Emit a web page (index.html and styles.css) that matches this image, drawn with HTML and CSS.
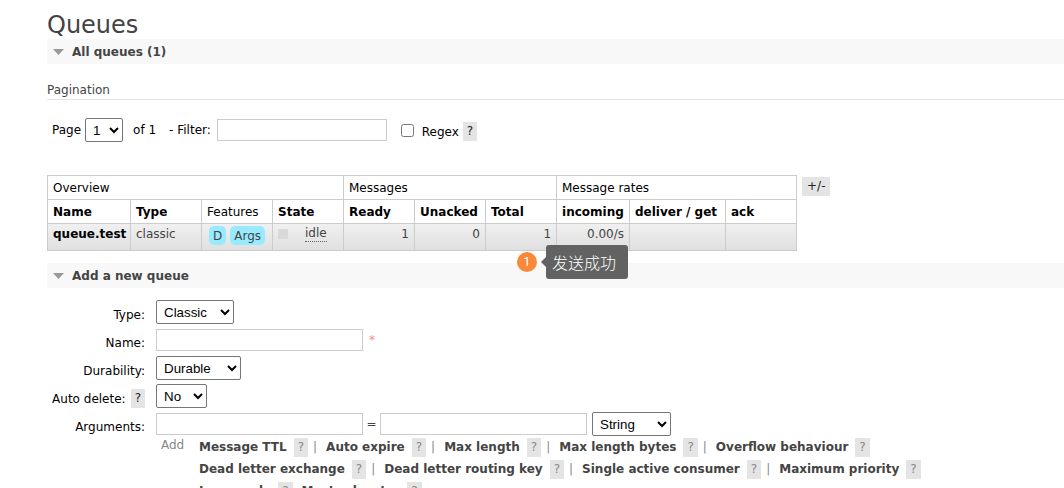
FILE: index.html
```html
<!DOCTYPE html>
<html lang="en">
<head>
<meta charset="utf-8">
<title>Queues</title>
<link rel="stylesheet" href="styles.css">
</head>
<body>
<main class="page">
  <h1 class="title">Queues</h1>
  <h2 class="section-bar"><svg class="caret" viewBox="0 0 11 6"><path d="M0 0h11L5.500 6z"/></svg>All queues (1)</h2>

  <h3 class="subhead">Pagination</h3>
  <div class="filters">
    <label for="pg">Page</label>
    <select id="pg" class="select select-page"><option>1</option></select>
    <span class="of">of 1</span>
    <label for="filter" class="filter-label">- Filter:</label>
    <input id="filter" class="text filter-input" type="text">
    <input id="regex" class="check" type="checkbox">
    <label for="regex" class="low">Regex</label>
    <button type="button" class="help low">?</button>
  </div>

  <div class="listing">
    <table class="queues">
      <colgroup><col class="c-name"><col class="c-std"><col class="c-std"><col class="c-std"><col class="c-std"><col class="c-std"><col class="c-std"><col class="c-in"><col class="c-get"><col class="c-std"></colgroup>
      <thead>
        <tr><th class="plain" colspan="4">Overview</th><th class="plain" colspan="3">Messages</th><th class="plain" colspan="3">Message rates</th></tr>
        <tr><th>Name</th><th>Type</th><th class="plain">Features</th><th>State</th><th>Ready</th><th>Unacked</th><th>Total</th><th>incoming</th><th>deliver / get</th><th>ack</th></tr>
      </thead>
      <tbody>
        <tr>
          <td><a class="queue-link" href="#">queue.test</a></td>
          <td>classic</td>
          <td><div class="tags"><span class="tag">D</span><span class="tag">Args</span></div></td>
          <td><div class="state"><span class="state-dot"></span><abbr class="idle">idle</abbr></div></td>
          <td class="num">1</td><td class="num">0</td><td class="num">1</td><td class="num">0.00/s</td><td></td><td></td>
        </tr>
      </tbody>
    </table>
    <button type="button" class="help columns">+/-</button>
    <div class="callout"><span class="badge">1</span><span class="tip">发送成功</span></div>
  </div>

  <h2 class="section-bar"><svg class="caret" viewBox="0 0 11 6"><path d="M0 0h11L5.500 6z"/></svg>Add a new queue</h2>

  <form class="form">
    <label class="label" for="type">Type:</label>
    <div class="field"><select id="type" class="select select-type"><option>Classic</option></select></div>
    <label class="label" for="name">Name:</label>
    <div class="field"><input id="name" class="text" type="text"><span class="required">*</span></div>
    <label class="label" for="dur">Durability:</label>
    <div class="field"><select id="dur" class="select select-dur"><option>Durable</option></select></div>
    <div class="label"><label for="auto">Auto delete:</label><button type="button" class="help">?</button></div>
    <div class="field"><select id="auto" class="select select-auto"><option>No</option></select></div>
    <label class="label" for="argkey">Arguments:</label>
    <div class="field">
      <input id="argkey" class="text" type="text"><span class="equals">=</span><input class="text" type="text" aria-label="Argument value">
      <select class="select select-string" aria-label="Argument type"><option>String</option></select>
    </div>
    <div class="args">
      <span class="add">Add</span>
      <div class="arg-lines">
        <div class="line"><a href="#">Message TTL</a><button type="button" class="help">?</button><i>|</i><a href="#">Auto expire</a><button type="button" class="help">?</button><i>|</i><a href="#">Max length</a><button type="button" class="help">?</button><i>|</i><a href="#">Max length bytes</a><button type="button" class="help">?</button><i>|</i><a href="#">Overflow behaviour</a><button type="button" class="help">?</button></div>
        <div class="line"><a href="#">Dead letter exchange</a><button type="button" class="help">?</button><i>|</i><a href="#">Dead letter routing key</a><button type="button" class="help">?</button><i>|</i><a href="#">Single active consumer</a><button type="button" class="help">?</button><i>|</i><a href="#">Maximum priority</a><button type="button" class="help">?</button></div>
        <div class="line"><a href="#">Lazy mode</a><button type="button" class="help last">?</button><a href="#">Master locator</a><button type="button" class="help">?</button></div>
      </div>
    </div>
  </form>
</main>
</body>
</html>
```
FILE: styles.css
```css
* { box-sizing: border-box; }
html { overflow-x: hidden; }
body {
  margin: 0;
  background: #fff;
  color: #444;
  font: 12px/18px Verdana, "DejaVu Sans", sans-serif;
}
.page { padding: 11px 0 0 47px; }
.title { margin: 0; padding-top: 1px; font-size: 24px; line-height: 27px; font-weight: normal; }
.section-bar {
  display: flex;
  align-items: center;
  height: 25px;
  margin: 0;
  padding-left: 6px;
  background: #f8f8f8;
  font-size: 12px;
  font-weight: bold;
}
.caret { width: 11px; height: 6px; margin-right: 8px; fill: #999; }
.subhead {
  margin: 17px 0 0;
  border-bottom: 1px solid #e4e4e4;
  font-size: 12px;
  font-weight: normal;
}

.filters {
  display: flex;
  align-items: center;
  height: 24px;
  margin: 18px 0 33px;
  padding-left: 5px;
  color: #000;
}
.select {
  height: 24px;
  padding-left: 3px;
  border: 1px solid #767676;
  border-radius: 2px;
  background: #fff;
  color: #000;
  font-family: Arial, "Liberation Sans", sans-serif;
}
.select-page { width: 38px; margin: 0 10px 0 4px; }
.select-type { width: 78px; }
.select-dur { width: 85px; }
.select-auto { width: 51px; }
.select-string { width: 79px; margin-left: 5px; }
.text {
  width: 207px;
  height: 22px;
  border: 1px solid #ccc;
  background: #fff;
}
.filter-input { width: 170px; }
.filter-label { margin: 0 6px 0 13px; }
.check { width: 13px; height: 13px; margin: 0 8px 0 14px; }
.low { margin-top: 3px; }
.help {
  height: 19px;
  padding: 0 4px;
  border: 0;
  background: #e4e4e4;
  color: #222;
  font: 12px/19px Verdana, "DejaVu Sans", sans-serif;
}
.filters .help { margin-left: 4px; }

.listing { position: relative; display: flex; align-items: flex-start; margin-bottom: 12px; }
.queues { width: 750px; border-collapse: collapse; table-layout: fixed; }
.c-name { width: 83px; }
.c-std { width: 71px; }
.c-in { width: 73px; }
.c-get { width: 96px; }
.queues th, .queues td {
  padding: 0 5px;
  border: 1px solid #ccc;
  text-align: left;
  white-space: nowrap;
}
.queues th { height: 24px; color: #000; }
.queues .plain { font-weight: normal; }
.queues td { height: 27px; padding-bottom: 6px; }
.queues .num { text-align: right; }
.queues tbody tr { background: linear-gradient(#f0f0f0, #dfdfdf); }
.queue-link { color: #000; font-weight: bold; text-decoration: none; }
.tags { display: flex; gap: 4px; height: 18px; padding: 1px 0 0 2px; }
.tag {
  flex: none;
  height: 19px;
  padding: 0 4px;
  border-radius: 5px;
  background: #98ebfe;
  line-height: 20px;
}
.state { display: flex; align-items: center; }
.state-dot { width: 10px; height: 10px; margin-right: 17px; background: #d9d9d9; }
.idle { border-bottom: 1px dotted #666; line-height: 15px; text-decoration: none; }
.columns { margin: 2px 0 0 5px; padding: 0 5px; }

.callout { position: absolute; top: 70px; left: 470px; display: flex; align-items: center; gap: 9px; }
.badge {
  width: 20px;
  height: 20px;
  border-radius: 50%;
  background: #f98838;
  color: #fff;
  text-align: center;
  font: 13px/20px Roboto, sans-serif;
}
.tip {
  position: relative;
  padding: 0 12px 0 6px;
  border-radius: 3px;
  background: #626262;
  color: #fff;
  font: 300 16px/34px "Noto Sans CJK SC", sans-serif;
}
.tip::before {
  content: "";
  position: absolute;
  top: 12px;
  left: -5px;
  border: 5px solid transparent;
  border-left: 0;
  border-right-color: #626262;
}

.form {
  display: grid;
  grid-template-columns: 98px 1fr;
  gap: 4px 11px;
  margin-top: 12px;
}
.label {
  display: flex;
  justify-content: flex-end;
  align-items: center;
  gap: 5px;
  height: 24px;
  padding-top: 5px;
  color: #000;
  white-space: nowrap;
}
.field { display: flex; align-items: center; height: 24px; }
.required { margin: 0 6px; color: #f88; }
.equals { width: 17px; text-align: center; }
.args { grid-column: 2; display: flex; margin-top: -4px; padding-left: 5px; }
.add { width: 38px; color: #888; }
.line { display: flex; align-items: center; height: 22px; white-space: nowrap; }
.line a { color: #444; font-weight: bold; text-decoration: none; }
.line i { margin: 0 9px 0 5px; color: #888; font-style: normal; }
.line .help { margin-left: 7px; color: #888; }
.line .last { margin-right: 9px; }
```
